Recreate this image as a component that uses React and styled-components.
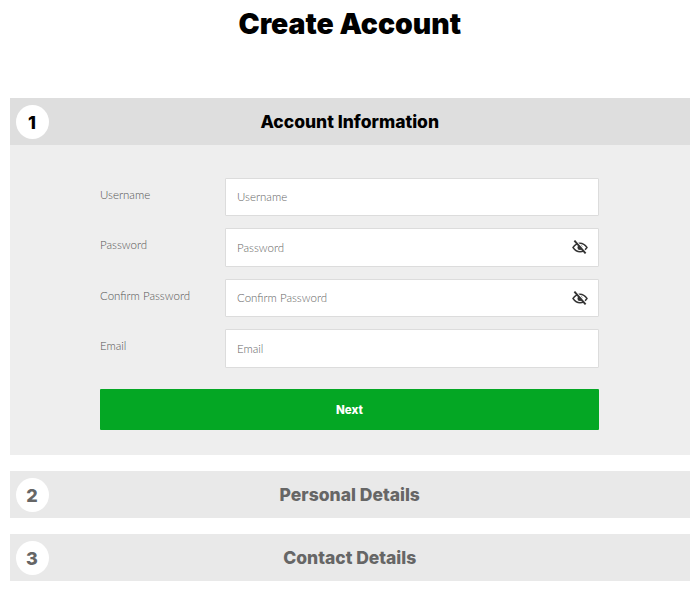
import React from "react";
import styled, { createGlobalStyle } from "styled-components";

const Global = createGlobalStyle`
  html, body { margin: 0; padding: 0; background: #fff; }
  body { font-family: "Inter", "Liberation Sans", sans-serif; }
`;

const Page = styled.div`
  width: 700px;
  height: 594px;
  box-sizing: border-box;
  padding: 0 10px 0 9.5px;
  overflow: hidden;
`;

const Title = styled.h1`
  margin: 0;
  height: 98px;
  padding-top: 6px;
  box-sizing: border-box;
  text-align: center;
  font-size: 28.4px;
  line-height: 36px;
  font-weight: 900;
  color: #000;
`;

const Section = styled.section`
  margin-bottom: 16px;
`;

const Header = styled.div`
  position: relative;
  height: 47px;
  display: flex;
  align-items: center;
  justify-content: center;
  background: ${(p) => (p.$active ? "#dedede" : "#e9e9e9")};
  color: ${(p) => (p.$active ? "#000" : "#666")};
`;

const Badge = styled.span`
  position: absolute;
  left: 6px;
  top: 7px;
  width: 33px;
  height: 34px;
  border-radius: 50%;
  background: #fff;
  display: flex;
  align-items: center;
  justify-content: center;
  font-size: 18px;
  font-weight: 800;
`;

const HeaderTitle = styled.h2`
  margin: 0;
  font-size: 17.5px;
  font-weight: 800;
`;

const Body = styled.div`
  background: #eee;
  height: 310px;
  box-sizing: border-box;
  padding: 32.5px 91px 0 90.5px;
`;

const Row = styled.div`
  display: flex;
  align-items: flex-start;
  height: 38.5px;
  margin-bottom: 12px;
`;

const Label = styled.label`
  width: 125px;
  flex: none;
  padding-top: 9px;
  font-family: "Lato", "Liberation Sans", sans-serif;
  font-size: 11.5px;
  line-height: 15px;
  font-weight: 300;
  color: #555;
`;

const InputBox = styled.div`
  flex: 1;
  height: 38.5px;
  box-sizing: border-box;
  display: flex;
  align-items: center;
  padding: 0 10px 0 11px;
  background: #fff;
  border: 1px solid #dcdcdc;
  border-radius: 1px;
`;

const Input = styled.input`
  flex: 1;
  min-width: 0;
  border: 0;
  outline: 0;
  padding: 0;
  background: transparent;
  font-family: "Lato", "Liberation Sans", sans-serif;
  font-size: 11.5px;
  font-weight: 300;
  &::placeholder { color: #666; opacity: 1; }
`;

const EyeSvg = styled.svg`
  width: 16px;
  height: 14px;
  flex: none;
  color: #333;
`;

const EyeHidden = () => (
  <EyeSvg viewBox="0 0 16 14" fill="none" stroke="currentColor" aria-hidden="true">
    <path d="M1 7.5C3 4.6 5.3 3.2 8 3.2s5 1.4 7 4.3c-2 2.9-4.3 4.3-7 4.3s-5-1.4-7-4.3Z" strokeWidth="1.4" />
    <circle cx="8" cy="7.5" r="2.5" fill="currentColor" stroke="none" />
    <path d="M3.9 0.6 15.1 13" stroke="#fff" strokeWidth="1.3" />
    <path d="M2.4 0.6 13.6 13.4" strokeWidth="1.9" />
  </EyeSvg>
);

const Submit = styled.button`
  display: block;
  width: 100%;
  height: 40.5px;
  margin-top: 21.5px;
  padding: 2px 0 0;
  border: 0;
  border-radius: 1px;
  background: #04a724;
  color: #fff;
  font-family: inherit;
  font-size: 11.5px;
  font-weight: 800;
`;

const fields = [
  { label: "Username" },
  { label: "Password", secret: true },
  { label: "Confirm Password", secret: true },
  { label: "Email" },
];

export default function App() {
  return (
    <Page>
      <Global />
      <Title>Create Account</Title>
      <Section>
        <Header $active>
          <Badge>1</Badge>
          <HeaderTitle>Account Information</HeaderTitle>
        </Header>
        <Body>
          {fields.map((f) => (
            <Row key={f.label}>
              <Label>{f.label}</Label>
              <InputBox>
                <Input placeholder={f.label} type={f.secret ? "password" : "text"} />
                {f.secret && <EyeHidden />}
              </InputBox>
            </Row>
          ))}
          <Submit>Next</Submit>
        </Body>
      </Section>
      <Section>
        <Header>
          <Badge>2</Badge>
          <HeaderTitle>Personal Details</HeaderTitle>
        </Header>
      </Section>
      <Section>
        <Header>
          <Badge>3</Badge>
          <HeaderTitle>Contact Details</HeaderTitle>
        </Header>
      </Section>
    </Page>
  );
}
